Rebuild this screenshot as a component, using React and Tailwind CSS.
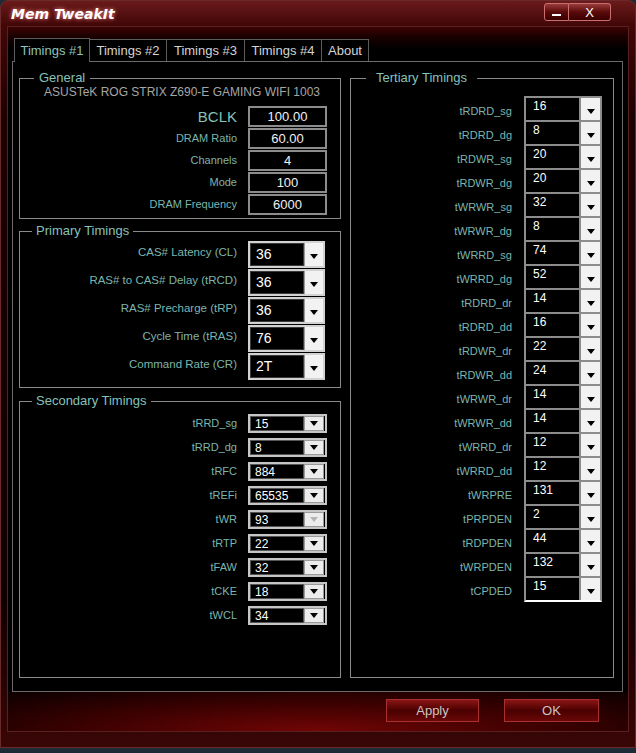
import React from 'react'

const general = [
  ['DRAM Ratio', '60.00'],
  ['Channels', '4'],
  ['Mode', '100'],
  ['DRAM Frequency', '6000'],
]

const primary = [
  ['CAS# Latency (CL)', '36'],
  ['RAS# to CAS# Delay (tRCD)', '36'],
  ['RAS# Precharge (tRP)', '36'],
  ['Cycle Time (tRAS)', '76'],
  ['Command Rate (CR)', '2T'],
]

const secondary = [
  ['tRRD_sg', '15'],
  ['tRRD_dg', '8'],
  ['tRFC', '884'],
  ['tREFi', '65535'],
  ['tWR', '93', true],
  ['tRTP', '22'],
  ['tFAW', '32'],
  ['tCKE', '18'],
  ['tWCL', '34'],
]

const tertiary = [
  ['tRDRD_sg', '16'], ['tRDRD_dg', '8'], ['tRDWR_sg', '20'], ['tRDWR_dg', '20'],
  ['tWRWR_sg', '32'], ['tWRWR_dg', '8'], ['tWRRD_sg', '74'], ['tWRRD_dg', '52'],
  ['tRDRD_dr', '14'], ['tRDRD_dd', '16'], ['tRDWR_dr', '22'], ['tRDWR_dd', '24'],
  ['tWRWR_dr', '14'], ['tWRWR_dd', '14'], ['tWRRD_dr', '12'], ['tWRRD_dd', '12'],
  ['tWRPRE', '131'], ['tPRPDEN', '2'], ['tRDPDEN', '44'], ['tWRPDEN', '132'],
  ['tCPDED', '15'],
]

const tabs = [
  ['Timings #1', 'w-[76px]'],
  ['Timings #2', 'w-[77px]'],
  ['Timings #3', 'w-[78px]'],
  ['Timings #4', 'w-[77px]'],
  ['About', 'w-[47px]'],
]

function Arrow({ dim }) {
  return (
    <svg width="8" height="5" viewBox="0 0 8 5">
      <polygon points="0,0 8,0 4,5" fill={dim ? '#b4b4b4' : '#000'} />
    </svg>
  )
}

function Group({ title, className, legend, children }) {
  return (
    <div className={'relative border border-[#8a8a8a] ' + className}>
      <span className={'absolute -top-[9px] bg-black text-[13px] leading-[16px] text-[#86c2b9] ' + legend}>
        {title}
      </span>
      {children}
    </div>
  )
}

export default function App() {
  return (
    <div className="w-[636px] h-[753px] bg-[#1d2b36] overflow-hidden" style={{ fontFamily: '"Liberation Sans", Arial, sans-serif' }}>
      <div className="w-[636px] h-[748px] rounded-t-[8px] border border-[#6a2a2a] bg-[linear-gradient(to_bottom,#6a1a1a_0px,#420707_24px,#1c0101_120px,#120000_600px,#3a0606_748px)] flex flex-col">
        {/* title bar */}
        <div className="h-[25px] flex items-start">
          <div className="pl-[10px] pt-[5px] text-[14px] leading-[16px] font-bold italic text-white [text-shadow:0_0_4px_#ff8a8a]" style={{ fontFamily: '"DejaVu Sans", Verdana, sans-serif' }}>
            Mem TweakIt
          </div>
          <div className="ml-auto mr-[24px] mt-[2px] flex">
            <div className="w-[25px] h-[18px] rounded-l-[3px] border border-[#c87070] bg-[linear-gradient(to_bottom,#9a3a3a,#5a0a0a_50%,#3a0000)] flex items-end justify-center pb-[4px]">
              <div className="w-[9px] h-[2px] bg-white" />
            </div>
            <div className="w-[42px] h-[18px] rounded-r-[3px] border border-l-0 border-[#c87070] bg-[linear-gradient(to_bottom,#9a3a3a,#5a0a0a_50%,#3a0000)] flex items-center justify-center text-white text-[13px] leading-none">
              X
            </div>
          </div>
        </div>

        {/* client frame */}
        <div className="mx-[6px] h-[706px] border border-[#5a2020] bg-[linear-gradient(to_bottom,#3c0404_0px,#1a0000_10px,#000_22px)] flex flex-col pt-[11px] pl-[4px] pr-[5px]">
          <div className="h-[23px] flex items-end pl-[2px]">
            {tabs.map(([t, w], i) => (
              <div
                key={t}
                className={
                  w + ' flex items-center justify-center text-[13px] border border-[#5c5c5c] ' +
                  (i === 0
                    ? 'h-[24px] -mb-px border-b-0 bg-black text-[#8cc4bb] relative z-10'
                    : 'h-[22px] border-l-0 border-b-0 text-[#d4d4d4] bg-black')
                }
              >
                {t}
              </div>
            ))}
          </div>

          <div className="h-[631px] border border-[#6a6a6a] bg-black flex pl-[6px] pt-[16px]">
            {/* left column */}
            <div className="w-[322px] flex flex-col">
              <Group title="General" className="h-[141px] px-0 pt-[6px]" legend="left-[14px] px-[5px]">
                <div className="text-center pl-[4px] text-[12px] leading-[15px] text-[#a6a6a6]">
                  ASUSTeK ROG STRIX Z690-E GAMING WIFI 1003
                </div>
                <div className="mt-[6px] flex flex-col pr-[13px]">
                  <div className="h-[22px] flex justify-end items-start">
                    <span className="pr-[11px] text-[15px] leading-[21px] text-[#86c2b9]">BCLK</span>
                    <div className="w-[79px] h-[21px] border-2 border-[#8c8c8c] flex items-center justify-center text-[13px] text-[#f0f0f0]">100.00</div>
                  </div>
                  {general.map(([l, v]) => (
                    <div key={l} className="h-[22px] flex justify-end items-start">
                      <span className="pr-[11px] text-[11px] leading-[20px] text-[#7cb5ad]">{l}</span>
                      <div className="w-[79px] h-[21px] border-2 border-[#8c8c8c] flex items-center justify-center text-[13px] text-[#f0f0f0]">{v}</div>
                    </div>
                  ))}
                </div>
              </Group>

              <Group title="Primary Timings" className="mt-[12px] h-[157px] pt-[9px] pr-[15px]" legend="left-[12px] px-[4px]">
                {primary.map(([l, v]) => (
                  <div key={l} className="h-[28px] flex justify-end items-start">
                    <span className="pr-[11px] text-[11.5px] leading-[22px] text-[#7cb5ad]">{l}</span>
                    <div className="w-[77px] h-[27px] border-2 border-[#d2d2d2] bg-black flex">
                      <div className="flex-1 border border-[#3a3a3a] flex items-center pl-[5px] text-[14px] text-white">{v}</div>
                      <div className="w-[19px] bg-[#f2f2f2] border-l border-[#9a9a9a] flex items-center justify-center pt-[4px]">
                        <Arrow />
                      </div>
                    </div>
                  </div>
                ))}
              </Group>

              <Group title="Secondary Timings" className="mt-[13px] h-[277px] pt-[12px] pr-[13px]" legend="left-[12px] px-[4px]">
                {secondary.map(([l, v, dim]) => (
                  <div key={l} className="h-[24px] flex justify-end items-start">
                    <span className="pr-[11px] text-[11px] leading-[18px] text-[#7cb5ad]">{l}</span>
                    <div className="w-[79px] h-[19px] border-2 border-[#c6c6c6] bg-black flex pr-[1px]">
                      <div className="flex-1 border border-[#555] flex items-center pl-[4px] text-[12px] text-white">{v}</div>
                      <div className="w-[20px] bg-[#ececec] border border-[#9a9a9a] flex items-center justify-center">
                        <Arrow dim={dim} />
                      </div>
                    </div>
                  </div>
                ))}
              </Group>
            </div>

            {/* right column */}
            <Group title="Tertiary Timings" className="ml-[9px] w-[264px] h-[600px] pt-[19px] pr-[11px]" legend="left-[15px] px-[10px]">
              <div className="flex flex-col">
                {tertiary.map(([l, v], i) => (
                  <div key={l} className="h-[24px] flex justify-end items-start">
                    <span className="pr-[12px] pt-[5px] text-[11px] leading-[16px] text-[#7cb5ad]">{l}</span>
                    <div className={'w-[78px] h-[24px] flex bg-black border-x-2 border-b-2 border-[#8c8c8c] ' + (i === 0 ? 'border-t-2 h-[26px] -mt-[2px]' : '') + (i === tertiary.length - 1 ? ' border-b-white' : '')}>
                      <div className="flex-1 pl-[7px] pt-[1px] text-[12px] leading-[14px] text-white">{v}</div>
                      <div className="w-[21px] bg-[#f2f2f2] border-l-2 border-[#8c8c8c] flex items-end justify-center pb-[6px]">
                        <Arrow />
                      </div>
                    </div>
                  </div>
                ))}
              </div>
            </Group>
          </div>

          {/* bottom buttons */}
          <div className="flex-1 -mx-[4px] -mr-[5px] bg-[radial-gradient(ellipse_70%_130%_at_50%_100%,#720505_0%,#400101_50%,#100000_100%)] flex justify-end items-start pt-[7px] pr-[29px]">
            <div className="w-[93px] h-[23px] border border-[#a83030] bg-[linear-gradient(to_bottom,#8a1515,#4a0000_50%,#6a0808)] flex items-center justify-center text-[13px] text-[#cfc4c4]">
              Apply
            </div>
            <div className="ml-[25px] w-[95px] h-[23px] border border-[#a83030] bg-[linear-gradient(to_bottom,#8a1515,#4a0000_50%,#6a0808)] flex items-center justify-center text-[13px] text-[#cfc4c4]">
              OK
            </div>
          </div>
        </div>
      </div>
    </div>
  )
}
